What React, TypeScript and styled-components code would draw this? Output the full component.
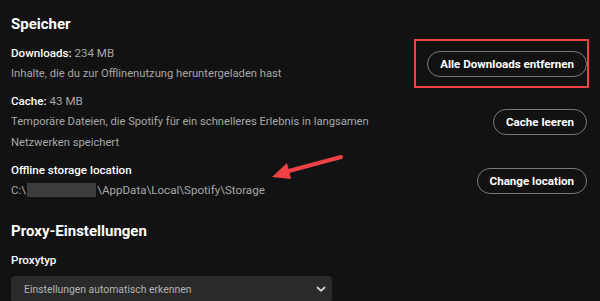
import React from "react";
import styled, { createGlobalStyle } from "styled-components";

const GlobalStyle = createGlobalStyle`
  html, body {
    margin: 0;
    padding: 0;
    background: #121212;
  }
  body {
    font-family: Roboto, "Liberation Sans", Arial, sans-serif;
    -webkit-font-smoothing: antialiased;
  }
`;

const Page = styled.div`
  position: relative;
  width: 600px;
  height: 301px;
  overflow: hidden;
  background: #121212;
  color: #fff;
  padding: 12px 13px 0 11px;
  box-sizing: border-box;
`;

const SectionTitle = styled.h2<{ $spaced?: boolean }>`
  margin: ${(p) => (p.$spaced ? "18px" : "0")} 0 7px 0;
  font-size: 15px;
  line-height: 24px;
  font-weight: 700;
  color: #fff;
`;

const Row = styled.div`
  display: flex;
  align-items: center;
  justify-content: space-between;
  margin-bottom: 7px;
`;

const TextCol = styled.div`
  display: flex;
  flex-direction: column;
`;

const Label = styled.div`
  font-size: 11.6px;
  line-height: 20px;
  font-weight: 500;
  color: #fff;
`;

const Value = styled.span`
  font-weight: 400;
  color: #a7a7a7;
`;

const Desc = styled.div<{ $path?: boolean }>`
  font-size: ${(p) => (p.$path ? "11.6px" : "11.2px")};
  line-height: 21px;
  color: #a7a7a7;
  max-width: 380px;
`;

const Redacted = styled.span`
  display: inline-block;
  width: 69px;
  height: 14px;
  margin: 0 1px;
  background: #3c3c3c;
  vertical-align: -3px;
`;

const PillButton = styled.button`
  height: 26px;
  padding: 0 12px;
  border: 1px solid #7a7a7a;
  border-radius: 13px;
  background: transparent;
  color: #fff;
  font-family: inherit;
  font-size: 11.6px;
  font-weight: 700;
  white-space: nowrap;
  cursor: pointer;
`;

const Highlight = styled.div`
  position: relative;
  &::after {
    content: "";
    position: absolute;
    inset: -12px -2px -11px -13px;
    border: 2.5px solid #ee4146;
    pointer-events: none;
  }
`;

const FieldLabel = styled.div`
  font-size: 11.6px;
  line-height: 20px;
  font-weight: 500;
  color: #fff;
  margin-bottom: 6px;
`;

const Select = styled.div`
  width: 321px;
  height: 26px;
  box-sizing: border-box;
  background: #2a2a2a;
  border-radius: 4px;
  display: flex;
  align-items: center;
  justify-content: space-between;
  padding: 0 6px 0 13px;
  font-size: 10.4px;
  color: #b3b3b3;
`;

const Arrow = styled.svg`
  position: absolute;
  left: 265px;
  top: 150px;
  pointer-events: none;
`;

const Chevron = () => (
  <svg width="10" height="8" viewBox="0 0 10 8">
    <path d="M1.5 2.5 L5 5.8 L8.5 2.5" stroke="#d0d0d0" strokeWidth="1.8" fill="none" strokeLinecap="round" strokeLinejoin="round" />
  </svg>
);

export default function App() {
  return (
    <Page>
      <GlobalStyle />
      <SectionTitle>Speicher</SectionTitle>

      <Row>
        <TextCol>
          <Label>
            Downloads: <Value>234 MB</Value>
          </Label>
          <Desc>Inhalte, die du zur Offlinenutzung heruntergeladen hast</Desc>
        </TextCol>
        <Highlight>
          <PillButton>Alle Downloads entfernen</PillButton>
        </Highlight>
      </Row>

      <Row>
        <TextCol>
          <Label>
            Cache: <Value>43 MB</Value>
          </Label>
          <Desc>
            Temporäre Dateien, die Spotify für ein schnelleres Erlebnis in langsamen Netzwerken speichert
          </Desc>
        </TextCol>
        <PillButton>Cache leeren</PillButton>
      </Row>

      <Row>
        <TextCol>
          <Label>Offline storage location</Label>
          <Desc $path>
            C:\<Redacted />\AppData\Local\Spotify\Storage
          </Desc>
        </TextCol>
        <PillButton>Change location</PillButton>
      </Row>

      <SectionTitle $spaced>Proxy-Einstellungen</SectionTitle>
      <FieldLabel>Proxytyp</FieldLabel>
      <Select>
        <span>Einstellungen automatisch erkennen</span>
        <Chevron />
      </Select>

      <Arrow width="80" height="32" viewBox="0 0 80 32">
        <path d="M76 7 L20 22" stroke="#ee4146" strokeWidth="4" strokeLinecap="round" />
        <path d="M7 27 L22 13 L26 29 Z" fill="#ee4146" />
      </Arrow>
    </Page>
  );
}
